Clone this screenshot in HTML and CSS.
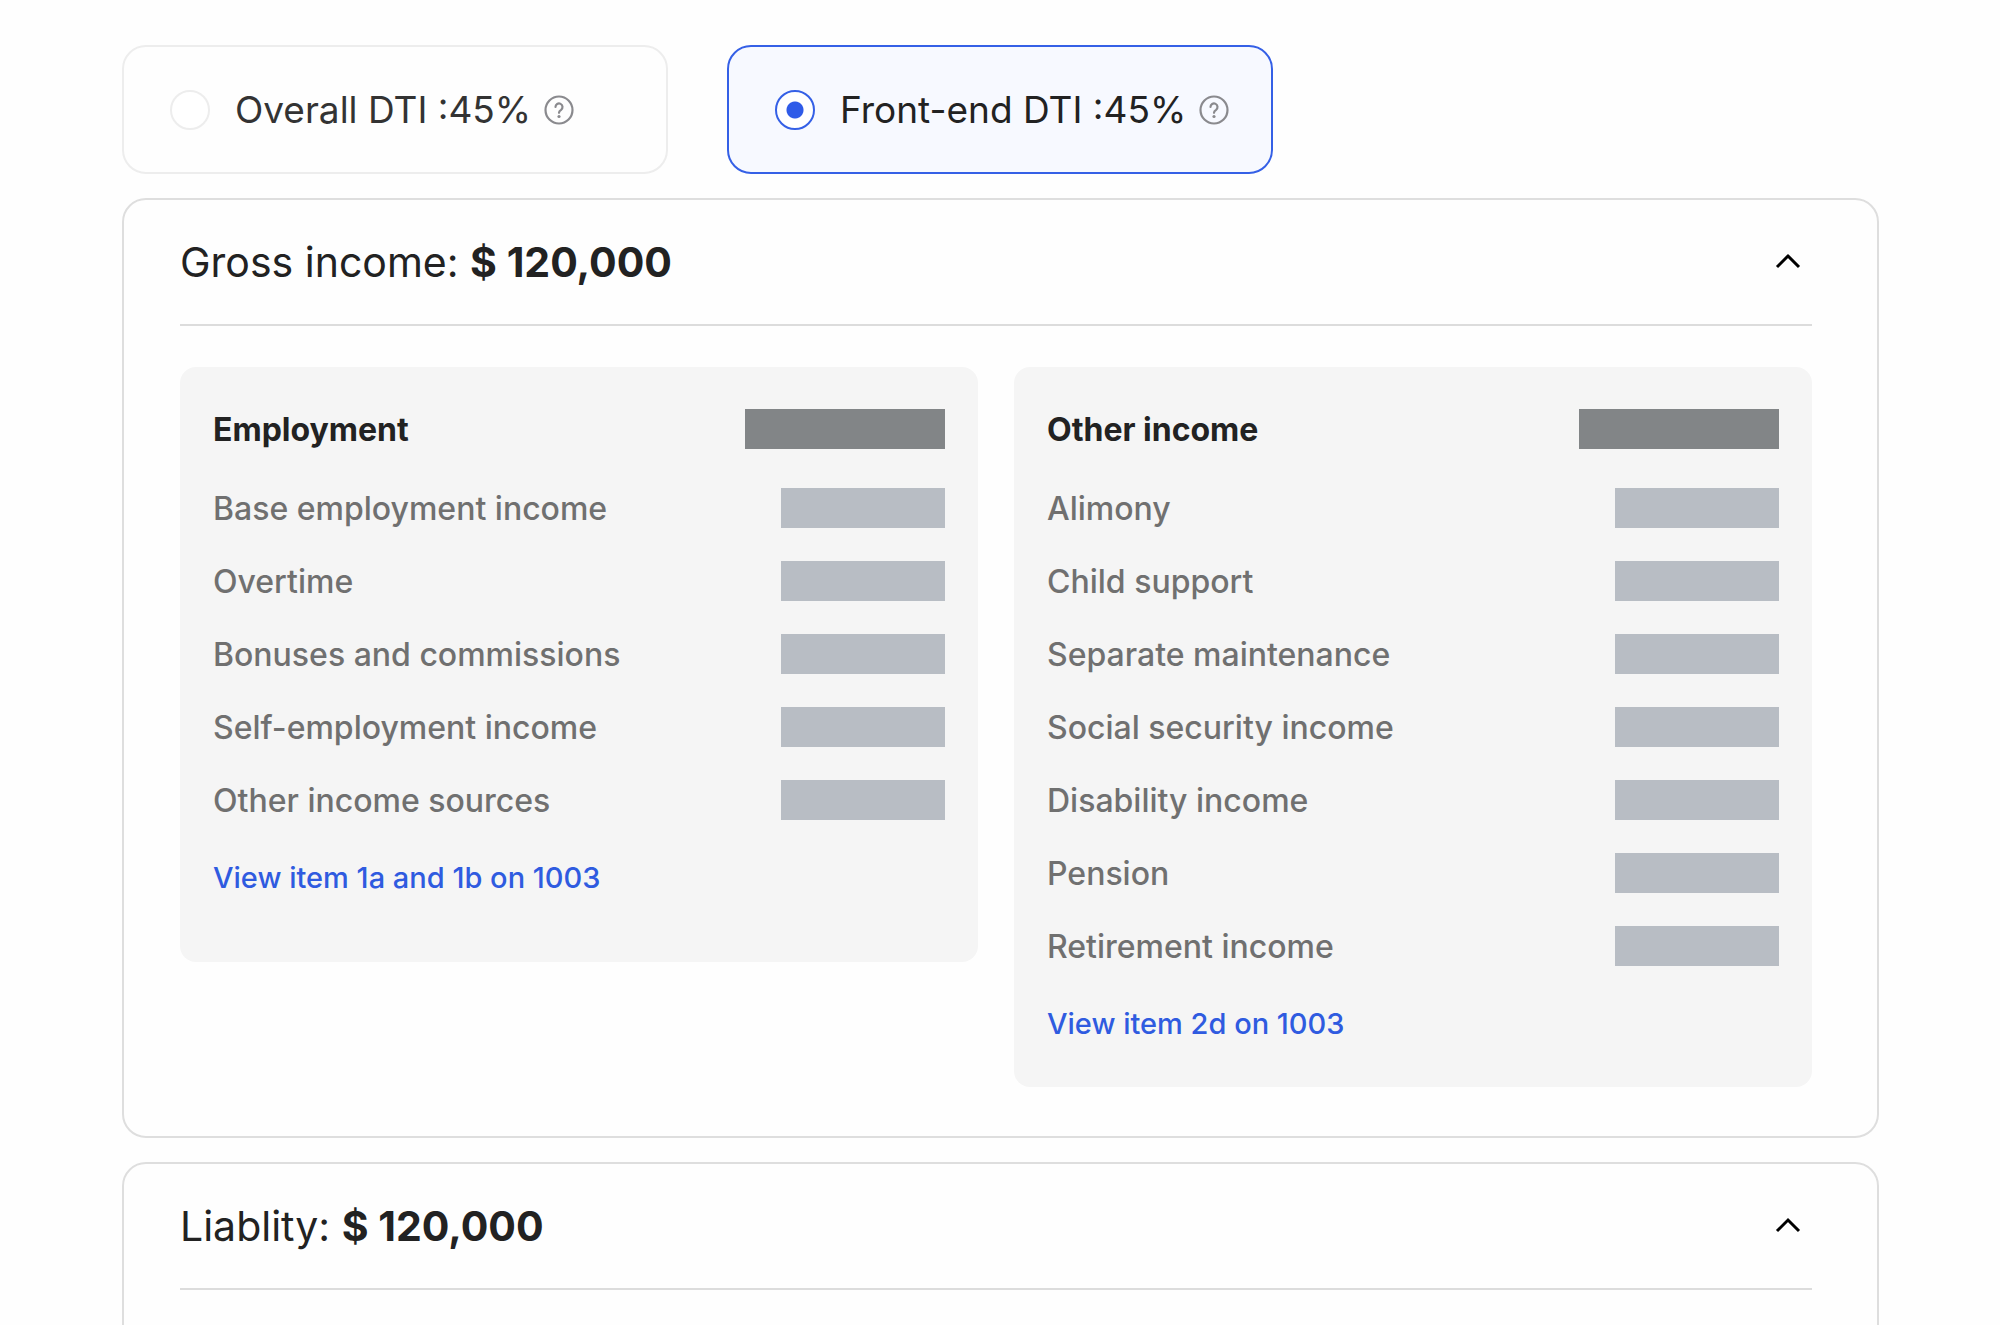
FILE: index.html
```html
<!DOCTYPE html>
<html lang="en">
<head>
    <meta charset="UTF-8">
    <meta name="viewport" content="width=device-width, initial-scale=1.0">
    <title>DTI Calculator</title>
    <link rel="stylesheet" href="styles.css">
</head>
<body>
    <main class="container">
        <div class="options">
            <div class="option">
                <input type="radio" name="dti" id="dti-overall" class="option-radio">
                <label for="dti-overall">Overall DTI :45%</label>
                <button type="button" class="help-btn" aria-label="Help">
                    <svg viewBox="0 0 30 30" fill="none" stroke="currentColor" stroke-width="2.2" stroke-linecap="round">
                        <circle cx="15" cy="15" r="13.5"/>
                        <path d="M11.5 12a3.5 3.5 0 1 1 5.6 2.8c-1.3 .9-2.1 1.5-2.1 3"/>
                        <circle cx="15" cy="21.5" r="1.6" fill="currentColor" stroke="none"/>
                    </svg>
                </button>
            </div>
            <div class="option option-selected">
                <input type="radio" name="dti" id="dti-front" class="option-radio" checked>
                <label for="dti-front">Front-end DTI :45%</label>
                <button type="button" class="help-btn" aria-label="Help">
                    <svg viewBox="0 0 30 30" fill="none" stroke="currentColor" stroke-width="2.2" stroke-linecap="round">
                        <circle cx="15" cy="15" r="13.5"/>
                        <path d="M11.5 12a3.5 3.5 0 1 1 5.6 2.8c-1.3 .9-2.1 1.5-2.1 3"/>
                        <circle cx="15" cy="21.5" r="1.6" fill="currentColor" stroke="none"/>
                    </svg>
                </button>
            </div>
        </div>

        <section class="panel">
            <div class="panel-header">
                <h2>Gross income: <strong>$ 120,000</strong></h2>
                <button type="button" class="toggle-btn" aria-label="Collapse gross income">
                    <svg viewBox="0 0 48 48" fill="none" stroke="currentColor" stroke-width="3"><path d="M13 29l11-11 11 11"/></svg>
                </button>
            </div>
            <div class="cards">
                <div class="card">
                    <div class="card-header">
                        <h3>Employment</h3>
                        <span class="bar bar-total"></span>
                    </div>
                    <ul class="rows">
                        <li>Base employment income <span class="bar"></span></li>
                        <li>Overtime <span class="bar"></span></li>
                        <li>Bonuses and commissions <span class="bar"></span></li>
                        <li>Self-employment income <span class="bar"></span></li>
                        <li>Other income sources <span class="bar"></span></li>
                    </ul>
                    <a href="#" class="card-link">View item 1a and 1b on 1003</a>
                </div>
                <div class="card">
                    <div class="card-header">
                        <h3>Other income</h3>
                        <span class="bar bar-total"></span>
                    </div>
                    <ul class="rows">
                        <li>Alimony <span class="bar"></span></li>
                        <li>Child support <span class="bar"></span></li>
                        <li>Separate maintenance <span class="bar"></span></li>
                        <li>Social security income <span class="bar"></span></li>
                        <li>Disability income <span class="bar"></span></li>
                        <li>Pension <span class="bar"></span></li>
                        <li>Retirement income <span class="bar"></span></li>
                    </ul>
                    <a href="#" class="card-link">View item 2d on 1003</a>
                </div>
            </div>
        </section>

        <section class="panel">
            <div class="panel-header">
                <h2>Liablity: <strong>$ 120,000</strong></h2>
                <button type="button" class="toggle-btn" aria-label="Collapse liability">
                    <svg viewBox="0 0 48 48" fill="none" stroke="currentColor" stroke-width="3"><path d="M13 29l11-11 11 11"/></svg>
                </button>
            </div>
            <div class="cards"></div>
        </section>
    </main>
</body>
</html>
```

FILE: styles.css
```css
* {
    margin: 0;
    padding: 0;
    box-sizing: border-box;
}

body {
    font-family: Inter, "Liberation Sans", sans-serif;
    background: #fefefe;
    color: #222;
    height: 100vh;
    overflow: hidden;
}

button {
    background: none;
    border: none;
    cursor: pointer;
}

.container {
    display: flex;
    flex-direction: column;
    gap: 24px;
    padding: 45px 121px 0 122px;
}

/* DTI options */
.options {
    display: grid;
    grid-template-columns: repeat(2, 546px);
    gap: 59px;
}

.option {
    display: flex;
    align-items: center;
    height: 129px;
    padding-left: 46px;
    border: 2px solid #ededed;
    border-radius: 24px;
    font-size: 37px;
    font-weight: 400;
    color: #333;
}

.option-selected {
    background: #f7f9ff;
    border-color: #3560e6;
    color: #222;
}

.option-radio {
    appearance: none;
    width: 40px;
    height: 40px;
    margin-right: 25px;
    border: 2px solid #ededed;
    border-radius: 50%;
    background: #fff;
}

.option-radio:checked {
    border-color: #3560e6;
    background: radial-gradient(circle, #2f5be8 8px, #fff 9px);
}

.help-btn {
    width: 30px;
    height: 30px;
    margin-left: 13px;
    color: #8a8a8e;
}

.help-btn svg,
.toggle-btn svg {
    display: block;
}

/* Panels */
.panel {
    padding: 0 65px 49px 56px;
    border: 2px solid #dedede;
    border-radius: 24px;
}

.panel-header {
    display: flex;
    align-items: center;
    justify-content: space-between;
    height: 126px;
    border-bottom: 2px solid #dcdcdc;
}

.panel-header h2 {
    font-size: 41px;
    font-weight: 400;
}

.panel-header strong {
    font-weight: 700;
}

.toggle-btn {
    width: 48px;
    height: 48px;
}

.cards {
    display: grid;
    grid-template-columns: 1fr 1fr;
    align-items: start;
    gap: 36px;
    margin-top: 41px;
}

.card {
    min-height: 595px;
    padding: 42px 33px 45px;
    background: #f5f5f5;
    border-radius: 16px;
}

.card-header,
.rows li {
    display: flex;
    align-items: center;
    justify-content: space-between;
    height: 40px;
}

.card-header {
    margin-bottom: 39px;
}

.card-header h3 {
    font-size: 32px;
    font-weight: 700;
}

.rows {
    display: grid;
    gap: 33px;
    margin-bottom: 40px;
    list-style: none;
    font-size: 32px;
    font-weight: 500;
    color: #707070;
}

.bar {
    width: 164px;
    height: 40px;
    background: #b8bdc4;
}

.bar-total {
    width: 200px;
    background: #828587;
}

.card-link {
    display: block;
    font-size: 29px;
    font-weight: 500;
    line-height: 36px;
    color: #2f5be0;
    text-decoration: none;
}
```
